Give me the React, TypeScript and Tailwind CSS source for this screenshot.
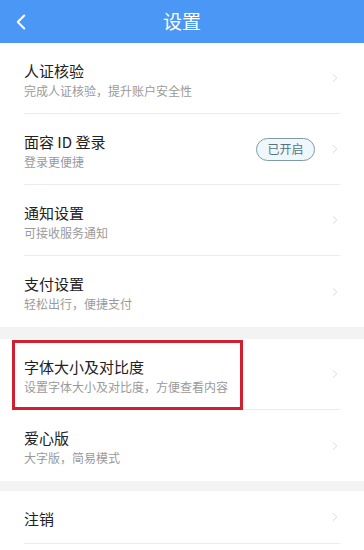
import { ChevronLeft, ChevronRight } from "lucide-react";

type Item = { title: string; sub?: string; badge?: string; marked?: boolean };

const groups: { items: Item[]; last?: boolean }[] = [
  {
    items: [
      { title: "人证核验", sub: "完成人证核验，提升账户安全性" },
      { title: "面容 ID 登录", sub: "登录更便捷", badge: "已开启" },
      { title: "通知设置", sub: "可接收服务通知" },
      { title: "支付设置", sub: "轻松出行，便捷支付" },
    ],
  },
  {
    items: [
      { title: "字体大小及对比度", sub: "设置字体大小及对比度，方便查看内容", marked: true },
      { title: "爱心版", sub: "大字版，简易模式" },
    ],
  },
  { items: [{ title: "注销" }], last: true },
];

function Row({ item, divider }: { item: Item; divider: boolean }) {
  return (
    <div className="relative bg-white">
      <div
        className={`mx-6 flex items-center ${item.sub ? "h-[71px]" : "h-[53px]"} ${
          divider ? "border-b border-[#ececec]" : ""
        }`}
      >
        <div className="flex-1 pt-[3px]">
          <p className="text-[15px] leading-[20px] text-[#222]">{item.title}</p>
          {item.sub && <p className="mt-[1px] text-[12px] leading-[17px] text-[#9a9a9a]">{item.sub}</p>}
        </div>
        {item.badge && (
          <span className="mr-[13px] flex h-[23px] w-[59px] items-center justify-center rounded-full border border-[#7f9ba6] bg-[#eef8fc] text-[12px] text-[#56727e]">
            {item.badge}
          </span>
        )}
        <ChevronRight size={14} strokeWidth={1.2} className="-mr-[2px] text-[#c8c8c8]" />
      </div>
      {item.marked && (
        <div className="pointer-events-none absolute left-[12px] top-[1px] h-[70px] w-[231px] border-[3px] border-[#d11f2f]" />
      )}
    </div>
  );
}

export default function App() {
  return (
    <div
      className="h-[550px] w-[364px] overflow-hidden bg-[#f3f3f3]"
      style={{ fontFamily: '"Noto Sans CJK SC", "Noto Sans", sans-serif' }}
    >
      <header className="relative flex h-[43px] items-center justify-center bg-[#4b97f5]">
        <ChevronLeft size={26} strokeWidth={1.8} className="absolute left-[8px] top-[9px] text-white" />
        <h1 className="text-[19px] text-white">设置</h1>
      </header>
      <div className="flex flex-col gap-[12px]">
        {groups.map((g, gi) => (
          <div key={gi} className={gi === 1 ? "-mb-[2px]" : ""}>
            {g.items.map((it, i) => (
              <Row key={it.title} item={it} divider={g.last ? true : i < g.items.length - 1} />
            ))}
            {g.last && <div className="h-[10px] bg-white" />}
          </div>
        ))}
      </div>
    </div>
  );
}
